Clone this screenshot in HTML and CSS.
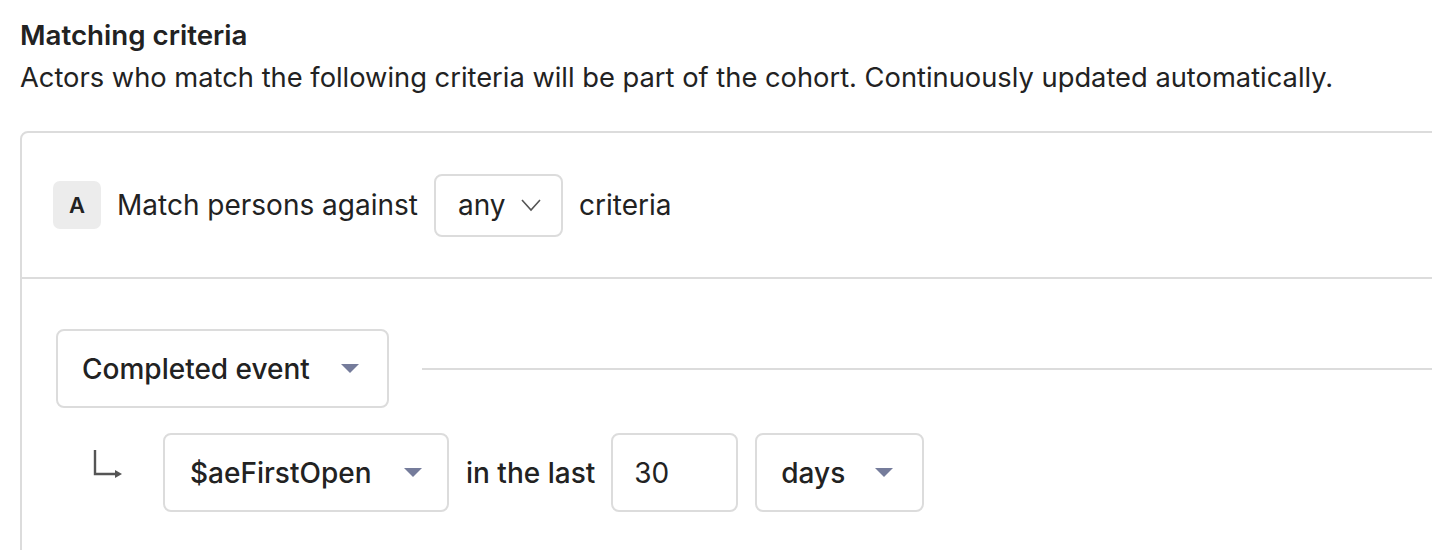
FILE: index.html
```html
<!DOCTYPE html>
<html>
<head>
<meta charset="utf-8">
<link rel="stylesheet" href="styles.css">
</head>
<body>
<div class="page">
  <h2 class="title">Matching criteria</h2>
  <p class="desc">Actors who match the following criteria will be part of the cohort. Continuously updated automatically.</p>
  <div class="card">
    <div class="card-head">
      <span class="badge">A</span>
      <span class="label">Match persons against</span>
      <div class="select select-any">
        <span>any</span>
        <svg class="chev" width="22" height="14" viewBox="0 0 22 14"><path d="M2 2 L11 12 L20 2" fill="none" stroke="#555" stroke-width="1.6"/></svg>
      </div>
      <span class="label">criteria</span>
    </div>
    <div class="card-body">
      <div class="row">
        <div class="select select-event">
          <span>Completed event</span>
          <span class="tri"></span>
        </div>
        <div class="rule"></div>
      </div>
      <div class="row sub">
        <div class="arrow-cell">
          <svg width="30" height="30" viewBox="0 0 30 30"><path d="M2 1 V25 H24" fill="none" stroke="#555" stroke-width="2.4"/><path d="M22 21 L29 25 L22 29 Z" fill="#555"/></svg>
        </div>
        <div class="select select-name">
          <span>$aeFirstOpen</span>
          <span class="tri"></span>
        </div>
        <span class="label label-last">in the last</span>
        <div class="input">30</div>
        <div class="select select-days">
          <span>days</span>
          <span class="tri"></span>
        </div>
      </div>
    </div>
  </div>
</div>
</body>
</html>
```
FILE: styles.css
```css
html, body {
  margin: 0;
  padding: 0;
  background: #fff;
  overflow: hidden;
}
body {
  font-family: Inter, "Noto Sans", sans-serif;
  color: #222;
}
.page {
  padding: 17px 0 0 20px;
}
.title {
  margin: 0;
  font-size: 27.7px;
  font-weight: 600;
  line-height: 36px;
  color: #222;
}
.desc {
  margin: 7px 0 0;
  font-size: 27.3px;
  line-height: 36px;
  color: #222;
}
.card {
  margin-top: 35px;
  width: 1440px;
  border: 2px solid #dcdcdc;
  border-radius: 8px;
  height: 440px;
  box-sizing: border-box;
}
.card-head {
  display: flex;
  align-items: center;
  height: 144px;
  padding-left: 31px;
  border-bottom: 2px solid #dcdcdc;
}
.badge {
  width: 48px;
  height: 48px;
  border-radius: 7px;
  background: #ececec;
  display: flex;
  align-items: center;
  justify-content: center;
  font-size: 22px;
  font-weight: 600;
  margin-right: 16px;
}
.label {
  font-size: 28px;
}
.select {
  display: flex;
  align-items: center;
  box-sizing: border-box;
  border: 2px solid #dcdcdc;
  border-radius: 8px;
  font-size: 28px;
}
.select-any {
  width: 129px;
  height: 63px;
  margin: 0 16px;
  padding-left: 22px;
}
.chev {
  margin-left: 14px;
}
.card-body {
  padding: 50px 0 0 34px;
}
.row {
  display: flex;
  align-items: center;
}
.sub {
  margin-top: 25px;
}
.select-event {
  width: 333px;
  height: 79px;
  padding-left: 24px;
  font-weight: 500;
}
.select-event .tri { margin-left: 31px; }
.rule {
  flex: 1;
  height: 2px;
  background: #dcdcdc;
  margin-left: 33px;
}
.tri {
  width: 0;
  height: 0;
  border-left: 9.5px solid transparent;
  border-right: 9.5px solid transparent;
  border-top: 9px solid #757c9b;
}
.arrow-cell {
  width: 107px;
  display: flex;
  padding-left: 37px;
  box-sizing: border-box;
  margin-top: -18px;
}
.select-name {
  width: 286px;
  height: 79px;
  padding-left: 25px;
  font-weight: 500;
}
.select-name .tri { margin-left: 32px; }
.label-last {
  margin: 0 16px 0 17px;
  font-weight: 500;
}
.input {
  box-sizing: border-box;
  width: 127px;
  height: 79px;
  border: 2px solid #dcdcdc;
  border-radius: 8px;
  display: flex;
  align-items: center;
  padding-left: 21px;
  font-size: 28px;
}
.select-days {
  width: 169px;
  height: 79px;
  margin-left: 17px;
  padding-left: 24px;
  font-weight: 500;
}
.select-days .tri { margin-left: 30px; }
```
